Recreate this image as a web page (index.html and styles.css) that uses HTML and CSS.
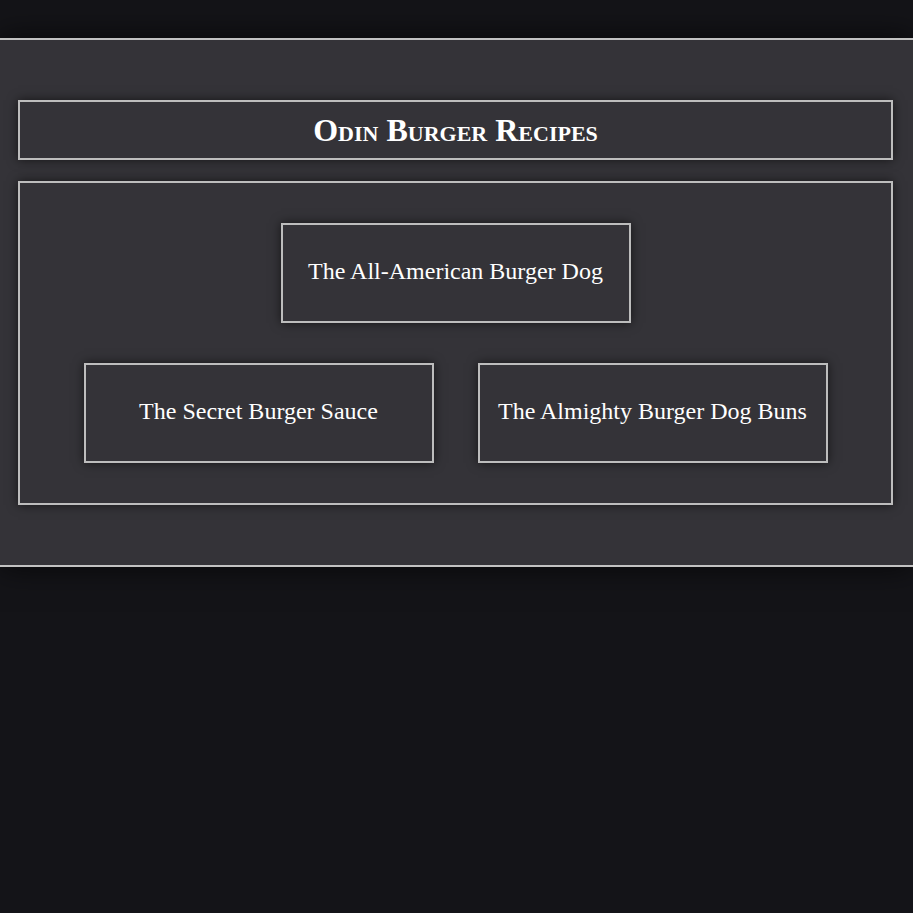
FILE: index.html
```html
<!DOCTYPE html>
<html>
<head>
<meta charset="utf-8">
<link rel="stylesheet" href="styles.css">
<title>Odin Burger Recipes</title>
</head>
<body>
<main class="main">
  <header class="header"><h1 class="title">Odin Burger Recipes</h1></header>
  <section class="content">
    <div class="row">
      <a class="card">The All-American Burger Dog</a>
    </div>
    <div class="row">
      <a class="card">The Secret Burger Sauce</a>
      <a class="card">The Almighty Burger Dog Buns</a>
    </div>
  </section>
</main>
</body>
</html>
```
FILE: styles.css
```css
html, body {
  margin: 0;
  padding: 0;
}
body {
  background: #141418;
  font-family: "Liberation Serif", "Times New Roman", serif;
  color: #fff;
  padding-top: 38px;
  height: 913px;
  box-sizing: border-box;
}
.main {
  background: #343338;
  border-top: 2px solid #c2c2c2;
  border-bottom: 2px solid #c2c2c2;
  box-shadow: 0 0 30px rgba(0,0,0,0.7);
  padding: 60px 20px 60px 18px;
}
.header {
  border: 2px solid #bdbdbd;
  height: 56px;
  display: flex;
  align-items: center;
  justify-content: center;
  box-shadow: 0 0 10px rgba(0,0,0,0.6);
}
.title {
  margin: 0;
  font-size: 32px;
  line-height: 1;
  font-weight: bold;
  font-variant: small-caps;
}
.content {
  margin-top: 21px;
  border: 2px solid #bdbdbd;
  padding: 40px 0;
  display: flex;
  flex-direction: column;
  gap: 40px;
  box-shadow: 0 0 10px rgba(0,0,0,0.6);
}
.row {
  display: flex;
  justify-content: center;
  gap: 44px;
}
.card {
  width: 346px;
  height: 92px;
  padding-bottom: 4px;
  border: 2px solid #bdbdbd;
  display: flex;
  align-items: center;
  justify-content: center;
  font-size: 24px;
  line-height: 1;
  color: #fff;
  box-shadow: 0 0 10px rgba(0,0,0,0.6);
}
```
